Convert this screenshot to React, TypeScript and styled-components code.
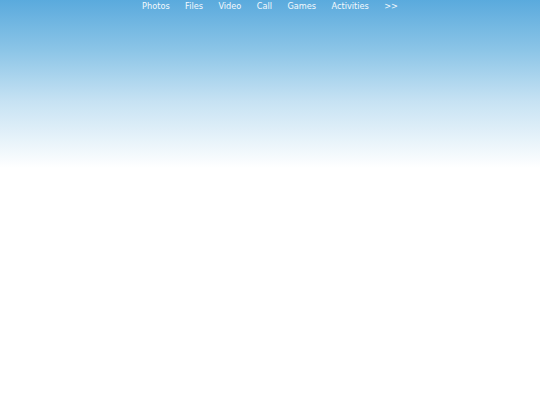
import React from "react";
import styled, { createGlobalStyle } from "styled-components";

const GlobalStyle = createGlobalStyle`
  html, body {
    margin: 0;
    padding: 0;
    background: #ffffff;
  }
  body {
    font-family: "DejaVu Sans", Verdana, sans-serif;
  }
`;

const Page = styled.div`
  width: 540px;
  height: 405px;
  background: #ffffff;
`;

const Sky = styled.header`
  height: 168px;
  background: linear-gradient(180deg, #5aaadd 0%, #8cc5e7 30%, #c6e2f3 60%, #ffffff 100%);
`;

const Nav = styled.nav`
  display: flex;
  justify-content: center;
  gap: 15.4px;
  padding: 1px 0 0 0;
  height: 12px;
`;

const NavItem = styled.a`
  font-size: 8.2px;
  line-height: 11px;
  color: #f4f9fd;
  text-decoration: none;
  cursor: pointer;
`;

const items = ["Photos", "Files", "Video", "Call", "Games", "Activities", ">>"];

function App() {
  return (
    <Page>
      <GlobalStyle />
      <Sky>
        <Nav>
          {items.map((item) => (
            <NavItem key={item}>{item}</NavItem>
          ))}
        </Nav>
      </Sky>
    </Page>
  );
}

export default App;
